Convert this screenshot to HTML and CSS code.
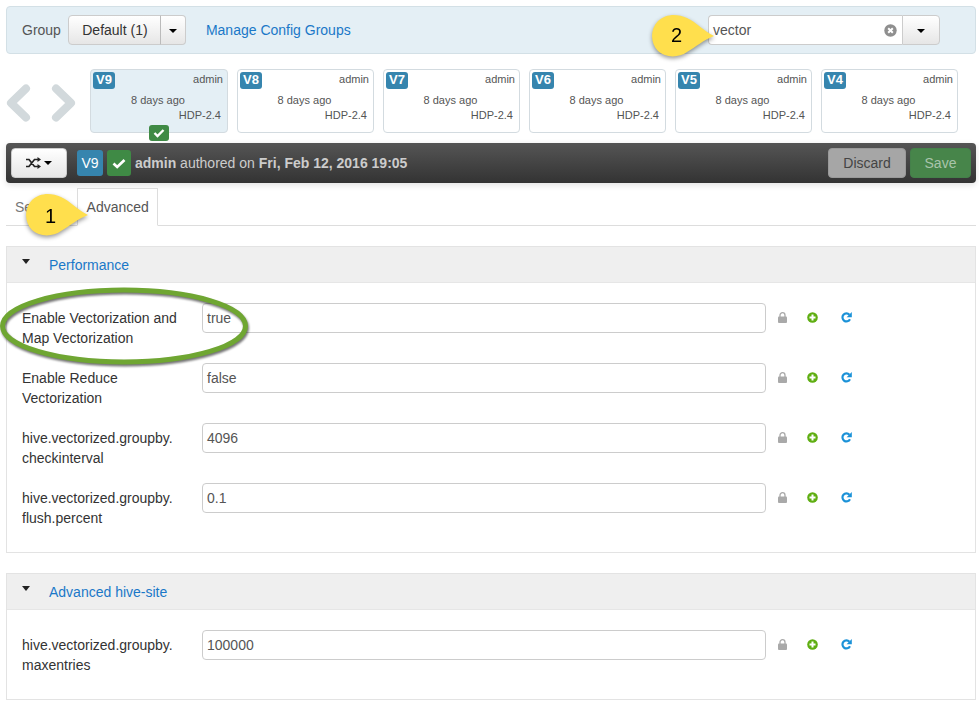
FILE: index.html

```html
<!DOCTYPE html>
<html lang="en">
<head>
  <meta charset="UTF-8" />
  <title>Hive Configs</title>
  <link rel="stylesheet" href="styles.css">
</head>
<body>
  <svg class="icon-defs" width="0" height="0">
    <symbol id="lock" viewBox="0 0 9 11"><path d="M2 5V3.200a2.500 2.500 0 0 1 5 0V5" fill="none" stroke="#a9a9a9" stroke-width="1.300"/><rect y="4.500" width="9" height="6.500" rx="1" fill="#a9a9a9"/></symbol>
    <symbol id="plus" viewBox="0 0 11 11"><circle cx="5.500" cy="5.500" r="5.300" fill="#5fae12"/><path d="M5.500 2.500v6M2.500 5.500h6" stroke="#fff" stroke-width="2"/></symbol>
    <symbol id="undo" viewBox="0 0 11 11"><path d="M9 7.300A4 4 0 1 1 8.400 2.700" fill="none" stroke="#1b92d8" stroke-width="2.200"/><path d="M10.800 0v5.200H5.600z" fill="#1b92d8"/></symbol>
  </svg>

  <div class="group-bar">
    <span class="group-label">Group</span>
    <div class="btn-group">
      <button class="btn group-btn">Default (1)</button>
      <button class="btn caret-btn"><span class="caret"></span></button>
    </div>
    <a class="manage-link">Manage Config Groups</a>
    <div class="filter">
      <div class="filter-input">
        <span>vector</span>
        <svg class="clear-icon" width="13" height="13" viewBox="0 0 13 13"><circle cx="6.500" cy="6.500" r="6.200" fill="#8f8f8f"/><path d="M4.200 4.200l4.600 4.600M8.800 4.200l-4.600 4.600" stroke="#fff" stroke-width="2"/></svg>
      </div>
      <button class="btn filter-caret"><span class="caret"></span></button>
    </div>
  </div>

  <div class="versions">
    <div class="arrows">
      <svg width="28" height="38" viewBox="0 0 28 38"><path d="M20 4.500L5 19l15 14.500" fill="none" stroke="#d2d9dc" stroke-width="8" stroke-linecap="round" stroke-linejoin="round"/></svg>
      <svg width="28" height="38" viewBox="0 0 28 38"><path d="M8 4.500L23 19 8 33.500" fill="none" stroke="#d2d9dc" stroke-width="8" stroke-linecap="round" stroke-linejoin="round"/></svg>
    </div>
    <div class="card current">
      <div class="card-top"><span class="v-tag">V9</span><span class="card-user">admin</span></div>
      <div class="card-time">8 days ago</div>
      <div class="card-stack">HDP-2.4</div>
      <span class="card-check"><svg width="12" height="10" viewBox="0 0 12 10"><path d="M1.500 5l3 3 6-6" fill="none" stroke="#fff" stroke-width="2.400"/></svg></span>
    </div>
    <div class="card">
      <div class="card-top"><span class="v-tag">V8</span><span class="card-user">admin</span></div>
      <div class="card-time">8 days ago</div>
      <div class="card-stack">HDP-2.4</div>
    </div>
    <div class="card">
      <div class="card-top"><span class="v-tag">V7</span><span class="card-user">admin</span></div>
      <div class="card-time">8 days ago</div>
      <div class="card-stack">HDP-2.4</div>
    </div>
    <div class="card">
      <div class="card-top"><span class="v-tag">V6</span><span class="card-user">admin</span></div>
      <div class="card-time">8 days ago</div>
      <div class="card-stack">HDP-2.4</div>
    </div>
    <div class="card">
      <div class="card-top"><span class="v-tag">V5</span><span class="card-user">admin</span></div>
      <div class="card-time">8 days ago</div>
      <div class="card-stack">HDP-2.4</div>
    </div>
    <div class="card">
      <div class="card-top"><span class="v-tag">V4</span><span class="card-user">admin</span></div>
      <div class="card-time">8 days ago</div>
      <div class="card-stack">HDP-2.4</div>
    </div>
  </div>

  <div class="action-bar">
    <button class="btn compare-btn">
      <svg width="15" height="12" viewBox="0 0 15 12"><path d="M0 2.500h3l5.500 7H12M0 9.500h3l5.500-7H12" fill="none" stroke="#222" stroke-width="1.700"/><path d="M11.500 0l3.500 2.500-3.500 2.500zM11.500 7l3.500 2.500-3.500 2.500z" fill="#222"/></svg>
      <span class="caret"></span>
    </button>
    <span class="bar-tag blue">V9</span>
    <span class="bar-tag green"><svg width="14" height="11" viewBox="0 0 14 11"><path d="M1.500 5.500l3.700 3.500 7.300-7" fill="none" stroke="#fff" stroke-width="2.700"/></svg></span>
    <span class="author"><b>admin</b> authored on <b>Fri, Feb 12, 2016 19:05</b></span>
    <div class="bar-buttons">
      <button class="btn discard">Discard</button>
      <button class="btn save">Save</button>
    </div>
  </div>

  <div class="tabs">
    <a class="tab">Settings</a>
    <a class="tab active">Advanced</a>
  </div>

  <section class="panel">
    <div class="panel-head"><span class="panel-caret"></span><a>Performance</a></div>
    <div class="panel-body">
      <div class="row">
        <label>Enable Vectorization and Map Vectorization</label>
        <div class="value">true</div>
        <div class="row-icons">
          <svg width="9" height="11"><use href="#lock"/></svg>
          <svg width="11" height="11"><use href="#plus"/></svg>
          <svg width="11" height="11"><use href="#undo"/></svg>
        </div>
      </div>
      <div class="row">
        <label>Enable Reduce Vectorization</label>
        <div class="value">false</div>
        <div class="row-icons">
          <svg width="9" height="11"><use href="#lock"/></svg>
          <svg width="11" height="11"><use href="#plus"/></svg>
          <svg width="11" height="11"><use href="#undo"/></svg>
        </div>
      </div>
      <div class="row">
        <label>hive.vectorized.groupby.<br>checkinterval</label>
        <div class="value">4096</div>
        <div class="row-icons">
          <svg width="9" height="11"><use href="#lock"/></svg>
          <svg width="11" height="11"><use href="#plus"/></svg>
          <svg width="11" height="11"><use href="#undo"/></svg>
        </div>
      </div>
      <div class="row">
        <label>hive.vectorized.groupby.<br>flush.percent</label>
        <div class="value">0.1</div>
        <div class="row-icons">
          <svg width="9" height="11"><use href="#lock"/></svg>
          <svg width="11" height="11"><use href="#plus"/></svg>
          <svg width="11" height="11"><use href="#undo"/></svg>
        </div>
      </div>
    </div>
  </section>

  <section class="panel">
    <div class="panel-head"><span class="panel-caret"></span><a>Advanced hive-site</a></div>
    <div class="panel-body">
      <div class="row">
        <label>hive.vectorized.groupby.<br>maxentries</label>
        <div class="value">100000</div>
        <div class="row-icons">
          <svg width="9" height="11"><use href="#lock"/></svg>
          <svg width="11" height="11"><use href="#plus"/></svg>
          <svg width="11" height="11"><use href="#undo"/></svg>
        </div>
      </div>
    </div>
  </section>

  <svg class="callout callout-one" width="66" height="46" viewBox="0 0 66 46">
    <path d="M63 22C52 26 45 33 36 38 28 44 14 44 7 37-1 29-1 15 7 7 14 0 26-1 36 4 45 8 53 17 63 22z" fill="#ffdf4d"/>
    <text x="20" y="30">1</text>
  </svg>
  <svg class="callout callout-two" width="66" height="46" viewBox="0 0 66 46">
    <path d="M63 22C52 26 45 33 36 38 28 44 14 44 7 37-1 29-1 15 7 7 14 0 26-1 36 4 45 8 53 17 63 22z" fill="#ffdf4d"/>
    <text x="20" y="28">2</text>
  </svg>
  <svg class="ring" width="252" height="82" viewBox="0 0 252 82">
    <ellipse cx="124" cy="39" rx="121.500" ry="36" fill="none" stroke="#6fa632" stroke-width="5"/>
  </svg>
</body>
</html>
```

FILE: styles.css

```css
* {
  box-sizing: border-box;
}
body {
  margin: 0;
  padding: 6px 3px 0 6px;
  position: relative;
  height: 705px;
  overflow: hidden;
  background-color: #fff;
  color: #333;
  font-family: 'Liberation Sans', Arial, sans-serif;
  font-size: 14px;
}
a {
  color: #1a78c8;
}
.icon-defs {
  position: absolute;
}
.btn {
  height: 30px;
  padding: 0 15px;
  border: 1px solid #ccc;
  border-radius: 4px;
  background: linear-gradient(#fff, #e6e6e6);
  color: #333;
  font: 14px 'Liberation Sans', Arial, sans-serif;
}
.caret {
  display: inline-block;
  width: 0;
  height: 0;
  border-top: 4px solid #000;
  border-left: 4px solid transparent;
  border-right: 4px solid transparent;
  vertical-align: middle;
}

.group-bar {
  display: flex;
  align-items: center;
  height: 48px;
  padding: 0 35px 0 15px;
  background-color: #e4eff5;
  border: 1px solid #d3e0e6;
  border-radius: 4px;
}
.group-label {
  color: #555;
  margin-right: 7px;
}
.btn-group {
  display: flex;
}
.group-btn {
  width: 93px;
  padding: 0 0 0 1px;
  border-radius: 4px 0 0 4px;
}
.caret-btn {
  width: 26px;
  padding: 0;
  border-left: 1px solid #bbb;
  border-radius: 0 4px 4px 0;
  margin-left: -1px;
}
.manage-link {
  margin-left: 20px;
}
.filter {
  display: flex;
  margin-left: auto;
}
.filter-input {
  display: flex;
  align-items: center;
  justify-content: space-between;
  width: 194px;
  height: 30px;
  padding: 0 5px 0 4px;
  background-color: #fff;
  border: 1px solid #ccc;
  border-right: 0;
  border-radius: 4px 0 0 4px;
  color: #555;
}
.filter-caret {
  width: 38px;
  padding: 0;
  border-radius: 0 4px 4px 0;
}

.versions {
  display: flex;
  gap: 9px;
  margin-top: 15px;
}
.arrows {
  display: flex;
  align-items: center;
  gap: 14px;
  width: 75px;
  padding-top: 3px;
}
.card {
  position: relative;
  width: 137px;
  height: 64px;
  padding: 2px 4px 0 2px;
  background-color: #fff;
  border: 1px solid #d3dbe0;
  border-radius: 4px;
  font-size: 11px;
  color: #555;
}
.card.current {
  width: 138px;
  background-color: #e4eff5;
}
.card-top {
  display: flex;
  justify-content: space-between;
}
.card-user {
  padding-top: 1px;
}
.v-tag {
  width: 22px;
  height: 17px;
  line-height: 15px;
  text-align: center;
  background-color: #3685ae;
  border-radius: 3px;
  color: #fff;
  font-size: 13px;
  font-weight: bold;
}
.card-time {
  margin-top: 4px;
  text-align: center;
  line-height: 14px;
}
.card-stack {
  margin-top: 1px;
  text-align: right;
  line-height: 14px;
  padding-right: 2px;
}
.card-check {
  position: absolute;
  left: 58px;
  bottom: -9px;
  display: flex;
  align-items: center;
  justify-content: center;
  width: 20px;
  height: 16px;
  background-color: #3f8a45;
  border-radius: 3px;
}

.action-bar {
  display: flex;
  align-items: center;
  height: 40px;
  margin-top: 10px;
  padding: 0 5px;
  background: linear-gradient(#555, #333);
  border-radius: 4px;
  box-shadow: 0 2px 6px rgba(0, 0, 0, 0.12);
  color: #ccc;
}
.compare-btn {
  display: flex;
  align-items: center;
  gap: 3px;
  width: 56px;
  padding: 0 0 0 14px;
  margin-right: 10px;
}
.bar-tag {
  display: flex;
  align-items: center;
  justify-content: center;
  height: 26px;
  border-radius: 3px;
  color: #fff;
}
.bar-tag.blue {
  width: 26px;
  background-color: #3685ae;
}
.bar-tag.green {
  width: 24px;
  margin-left: 4px;
  background-color: #3f8a45;
}
.author {
  margin-left: 4px;
}
.bar-buttons {
  display: flex;
  gap: 4px;
  margin-left: auto;
}
.discard {
  width: 78px;
  padding: 0;
  background: #a6a6a6;
  border-color: #999;
  color: #444;
}
.save {
  width: 61px;
  padding: 0;
  background: #47854a;
  border-color: #44804a;
  color: #a9c4aa;
}

.tabs {
  display: flex;
  height: 38px;
  margin-top: 5px;
  border-bottom: 1px solid #ddd;
}
.tab {
  padding: 11px 11px 0 9px;
  color: #777;
}
.tab.active {
  height: 38px;
  padding: 10px 8px 0 9px;
  background-color: #fff;
  border: 1px solid #ddd;
  border-bottom-color: #fff;
  color: #555;
}

.panel {
  margin-top: 20px;
  border: 1px solid #e3e3e3;
}
.panel-head {
  display: flex;
  align-items: center;
  height: 36px;
  padding-left: 15px;
  background-color: #efefef;
  border-bottom: 1px solid #e6e6e6;
}
.panel-caret {
  width: 0;
  height: 0;
  margin: 0 19px 6px 0;
  border-top: 5px solid #222;
  border-left: 4.500px solid transparent;
  border-right: 4.500px solid transparent;
}
.panel-body {
  padding: 20px 0 9px;
}
.row {
  display: flex;
  height: 60px;
}
.row label {
  flex: none;
  width: 195px;
  padding: 5px 10px 0 15px;
  line-height: 20px;
  color: #333;
}
.value {
  flex: none;
  width: 564px;
  height: 30px;
  padding: 5px 4px;
  line-height: 18px;
  border: 1px solid #ccc;
  border-radius: 4px;
  color: #555;
}
.row-icons {
  display: flex;
  align-items: flex-start;
  gap: 20px;
  padding: 9px 0 0 12px;
}
.row-icons svg:last-child {
  margin-left: 3px;
}

.callout {
  position: absolute;
  overflow: visible;
  filter: drop-shadow(0 2px 2px rgba(0, 0, 0, 0.4));
}
.callout text {
  font: 20px 'Liberation Sans', Arial, sans-serif;
  fill: #000;
}
.callout-one {
  left: 25px;
  top: 193px;
}
.callout-two {
  left: 651px;
  top: 14px;
}
.ring {
  position: absolute;
  left: 0;
  top: 287px;
  overflow: visible;
  filter: drop-shadow(1px 2px 1px rgba(0, 0, 0, 0.55));
}
```
